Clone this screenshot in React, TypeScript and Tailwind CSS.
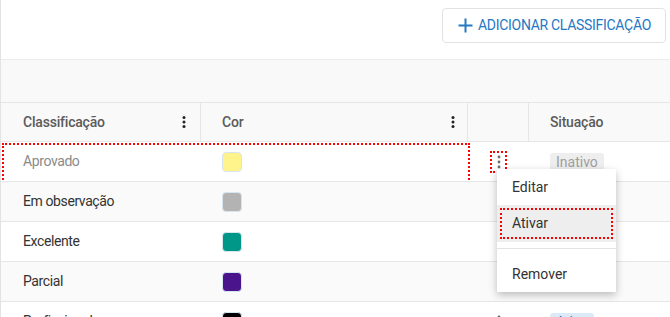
const ROWS = [
  { name: "Aprovado", color: "bg-[#fff38c]", inactive: true, status: "Inativo" },
  { name: "Em observação", color: "bg-[#b3b3b3]", status: "" },
  { name: "Excelente", color: "bg-[#009688]", status: "" },
  { name: "Parcial", color: "bg-[#4a148c]", status: "" },
  { name: "Profissional", color: "bg-[#000000]", status: "Ativo" },
];

function Kebab({ className = "" }: { className?: string }) {
  return (
    <svg width="4" height="12" viewBox="0 0 4 12" className={className} fill="currentColor">
      <circle cx="2" cy="1.6" r="1.5" />
      <circle cx="2" cy="6" r="1.5" />
      <circle cx="2" cy="10.4" r="1.5" />
    </svg>
  );
}

function RowKebab() {
  return (
    <svg width="4" height="14" viewBox="0 0 4 14" fill="currentColor" className="text-[#6b6b6b]">
      <circle cx="2" cy="2" r="1.4" />
      <circle cx="2" cy="7" r="1.4" />
      <circle cx="2" cy="12" r="1.4" />
    </svg>
  );
}

export default function App() {
  return (
    <div className="relative w-[670px] h-[317px] overflow-hidden bg-white border-l border-[#e3e3e3] font-['Roboto',sans-serif]">
      <div className="h-[59px] flex justify-end items-start pt-2 pr-1">
        <button className="h-[35px] w-[224px] flex items-center gap-[5px] pl-[15px] rounded border border-[#e2e2e2] bg-white text-[#2478c4] text-[14px] tracking-[-0.3px]">
          <svg width="15" height="15" viewBox="0 0 15 15" className="shrink-0">
            <path d="M7.5 0.5v14M0.5 7.5h14" stroke="#2478c4" strokeWidth="2" />
          </svg>
          <span>ADICIONAR CLASSIFICAÇÃO</span>
        </button>
      </div>

      <div className="h-[43px] bg-[#f9f9f9] border-t border-[#ececec]"></div>

      <div className="grid grid-cols-[200px_267px_61px_1fr] h-[40px] bg-[#f9f9f9] border-y border-[#e6e6e6] text-[14px] font-medium text-[#5b5b5b] tracking-[-0.2px]">
        <div className="flex items-center justify-between pl-[22px] pr-[14px] border-r border-[#e6e6e6]">
          <span>Classificação</span>
          <Kebab className="text-[#222]" />
        </div>
        <div className="flex items-center justify-between pl-[21px] pr-[12px] border-r border-[#e6e6e6]">
          <span>Cor</span>
          <Kebab className="text-[#222]" />
        </div>
        <div className="border-r border-[#e6e6e6]"></div>
        <div className="flex items-center pl-[21px]">Situação</div>
      </div>

      {ROWS.map((row, i) => (
        <div
          key={row.name}
          className={`relative grid grid-cols-[200px_267px_61px_1fr] h-[40px] border-b border-[#e6e6e6] text-[14px] tracking-[-0.4px] ${
            i % 2 === 1 ? "bg-[#fafafa]" : "bg-white"
          }`}
        >
          <div className={`flex items-center pl-[22px] ${row.inactive ? "text-[#8a8a8a]" : "text-[#333]"}`}>
            {row.name}
          </div>
          <div className="flex items-center pl-[21px]">
            <div className={`w-[20px] h-[20px] rounded-[4px] border border-[#d7e5f0] ${row.color}`}></div>
          </div>
          <div className="flex items-center justify-center">
            {i === 0 ? (
              <div className="w-[17px] h-[22px] flex items-center justify-center border-2 border-dotted border-[#ff0000]">
                <RowKebab />
              </div>
            ) : (
              <RowKebab />
            )}
          </div>
          <div className="flex items-center pl-[21px]">
            {row.status === "Inativo" && (
              <span className="px-[6px] h-[18px] leading-[18px] rounded-[3px] bg-[#eeeeee] text-[#9e9e9e] text-[14px] tracking-normal">Inativo</span>
            )}
            {row.status === "Ativo" && (
              <span className="px-[6px] h-[18px] leading-[18px] rounded-[3px] bg-[#dce9f6] text-[#2478c4] text-[14px] tracking-normal">Ativo</span>
            )}
          </div>
          {i === 0 && (
            <div className="absolute left-[1px] top-[1px] w-[468px] h-[41px] border-2 border-dotted border-[#ff0000] pointer-events-none"></div>
          )}
        </div>
      ))}

      <div className="absolute left-[496px] top-[169px] w-[119px] h-[123px] bg-white shadow-[0_3px_8px_rgba(0,0,0,0.25)] text-[14px] text-[#333]">
        <div className="h-[36px] flex items-center pl-[15px]">Editar</div>
        <div className="h-[37px] bg-[#eeeeee] px-[3px] py-[3px]">
          <div className="h-full flex items-center pl-[12px] border-2 border-dotted border-[#ff0000]">
            <span className="-ml-[2px]">Ativar</span>
          </div>
        </div>
        <div className="mt-[6px] border-t border-[#e3e3e3]"></div>
        <div className="h-[43px] flex items-end pl-[15px] pb-[7px]">Remover</div>
      </div>
    </div>
  );
}
